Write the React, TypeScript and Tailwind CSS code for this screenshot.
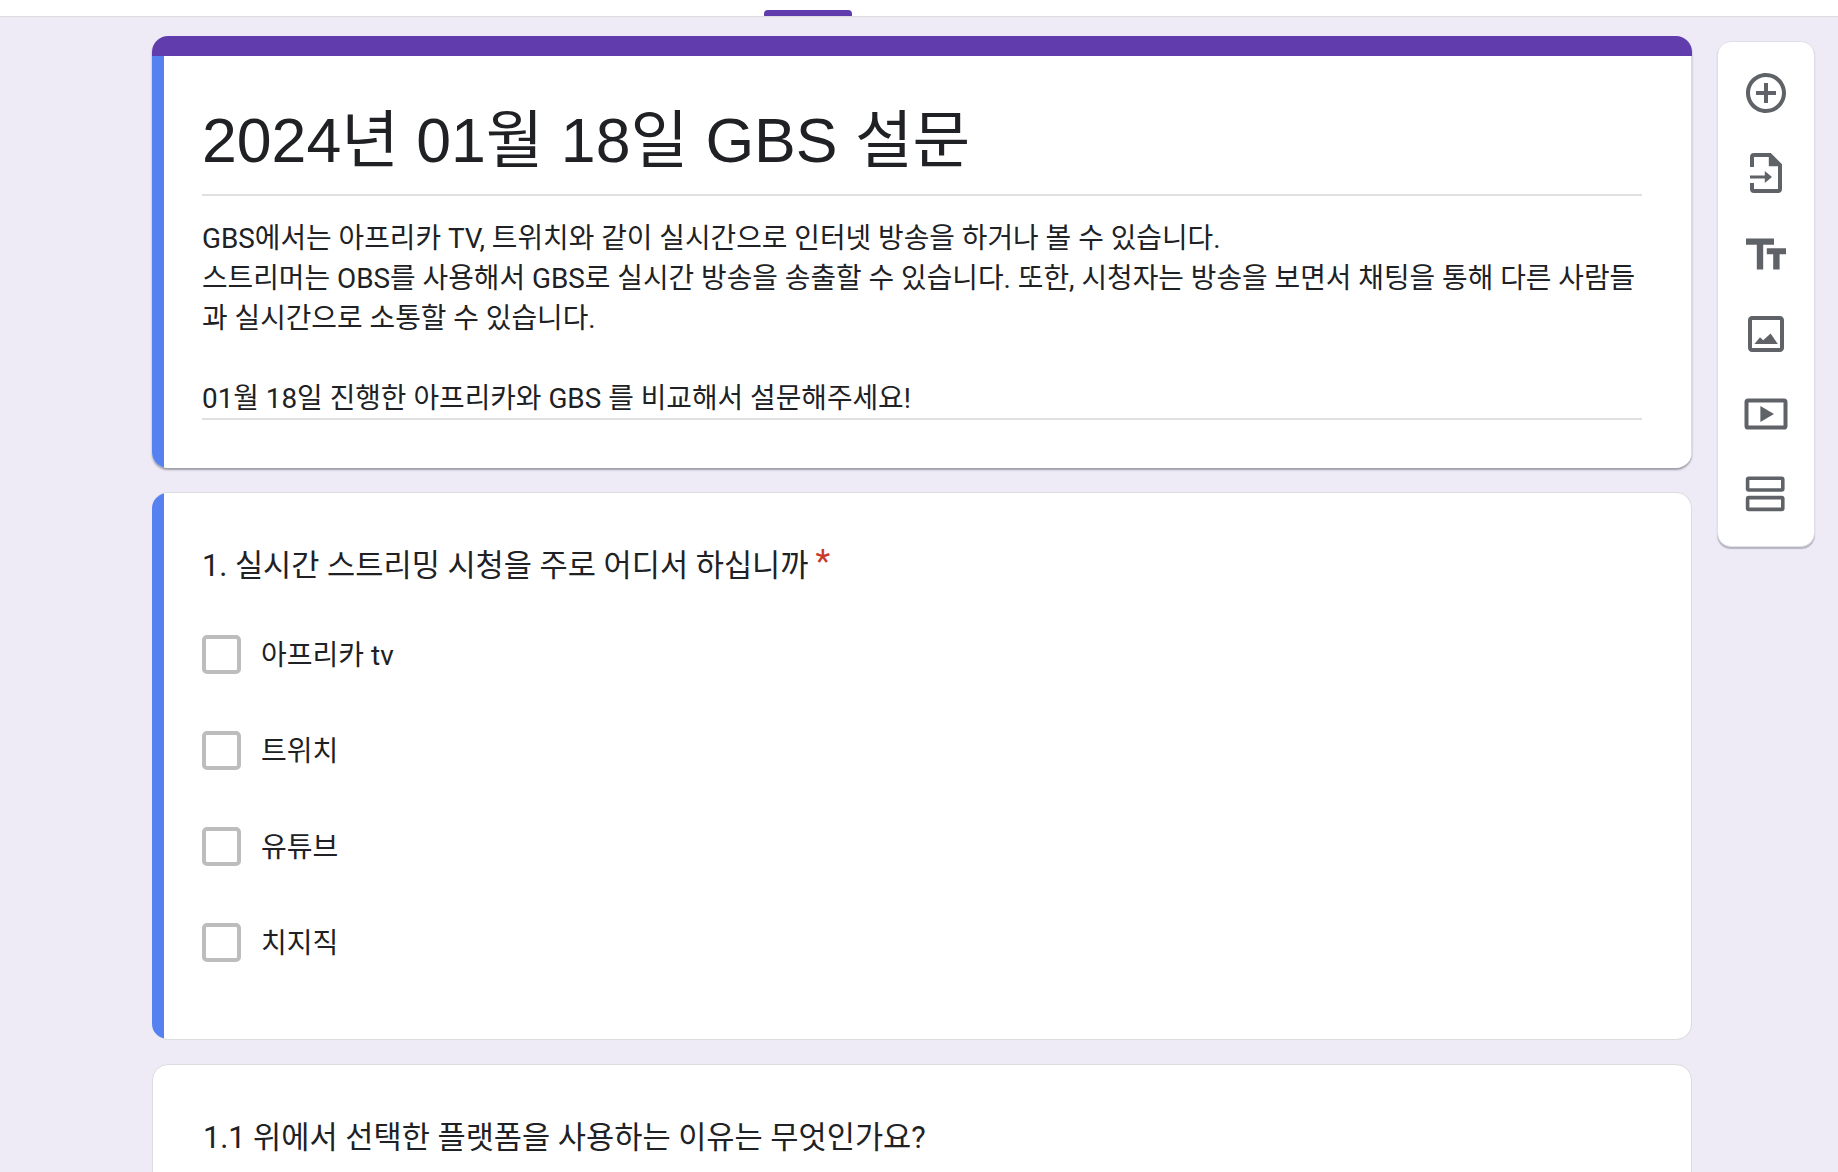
const font = 'font-["Roboto","Noto_Sans_CJK_KR",sans-serif]';

const options = ['아프리카 tv', '트위치', '유튜브', '치지직'];

const description = [
  'GBS에서는 아프리카 TV, 트위치와 같이 실시간으로 인터넷 방송을 하거나 볼 수 있습니다.',
  '스트리머는 OBS를 사용해서 GBS로 실시간 방송을 송출할 수 있습니다. 또한, 시청자는 방송을 보면서 채팅을 통해 다른 사람들',
  '과 실시간으로 소통할 수 있습니다.',
  '\u00a0',
  '01월 18일 진행한 아프리카와 GBS 를 비교해서 설문해주세요!',
];

function ToolIcon({ children }: { children: React.ReactNode }) {
  return (
    <button className="flex items-center justify-center w-[48px] h-[48px]">
      <svg viewBox="0 0 24 24" className="w-[48px] h-[48px] fill-[#5f6368]">
        {children}
      </svg>
    </button>
  );
}

function Sidebar() {
  return (
    <aside className="ml-[25px] mt-[24px] w-[98px] h-[506px] shrink-0 flex flex-col items-center justify-between pt-[27px] pb-[28px] bg-white rounded-[14px] border border-[#dfdfe8] shadow-[0_2px_1px_rgba(80,80,90,0.35)]">
      <ToolIcon>
        <path d="M13 7h-2v4H7v2h4v4h2v-4h4v-2h-4V7zm-1-5C6.48 2 2 6.48 2 12s4.48 10 10 10 10-4.48 10-10S17.52 2 12 2zm0 18c-4.41 0-8-3.59-8-8s3.59-8 8-8 8 3.59 8 8-3.59 8-8 8z" />
      </ToolIcon>
      <ToolIcon>
        <path d="M5 9V4a1 1 0 0 1 1-1h8l5 5v12a1 1 0 0 1-1 1H6a1 1 0 0 1-1-1v-3" className="fill-none stroke-[#5f6368] stroke-2" />
        <path d="M13.4 2.6v6h6z" />
        <path d="M4 13.2h7.4v-2.2l3.6 3-3.6 3v-2.2H4z" />
      </ToolIcon>
      <ToolIcon>
        <path d="M2 4.8v3.1h5.4v12.3h3.2V7.9H16V4.8H2zm20 4.8h-9.6v3h3.2v7.6h3.2v-7.6H22V9.6z" />
      </ToolIcon>
      <ToolIcon>
        <path d="M19 5v14H5V5h14m0-2H5c-1.1 0-2 .9-2 2v14c0 1.1.9 2 2 2h14c1.1 0 2-.9 2-2V5c0-1.1-.9-2-2-2z" />
        <path d="M6.2 17l2.8-3.4 1.6 1.5 3.7-3.3 3.6 5.2z" />
      </ToolIcon>
      <ToolIcon>
        <rect x="2.25" y="5.25" width="19.5" height="13.5" rx="0.8" className="fill-none stroke-[#5f6368] stroke-2" />
        <path d="M9.2 8l6.8 4-6.8 4z" />
      </ToolIcon>
      <ToolIcon>
        <rect x="2.8" y="4.1" width="17.6" height="5.9" rx="0.6" className="fill-none stroke-[#5f6368] stroke-[1.8]" />
        <rect x="2.8" y="13.8" width="17.6" height="5.9" rx="0.6" className="fill-none stroke-[#5f6368] stroke-[1.8]" />
      </ToolIcon>
    </aside>
  );
}

export default function App() {
  return (
    <div className={`h-screen overflow-hidden bg-[#eeebf7] text-[#202124] ${font}`}>
      <header className="relative h-[17px] bg-white border-b border-[#dadce0]">
        <div className="absolute left-[764px] top-[10px] w-[88px] h-[6px] rounded-t-[4px] bg-[#603cac]" />
      </header>

      <main className="flex items-start pl-[152px]">
        <div className="w-[1540px] shrink-0 pt-[19px] flex flex-col">
          <section className="h-[432px] rounded-[16px] overflow-hidden bg-white flex flex-col shadow-[0_2px_2px_rgba(60,60,70,0.45)]">
            <div className="h-[20px] bg-[#603cac]" />
            <div className="flex-1 flex border-r border-[#dadce0]">
              <div className="w-[12px] shrink-0 bg-[#5582f0]" />
              <div className="flex-1 min-w-0 pl-[38px] pr-[49px]">
                <h1 className='h-[140px] pt-[48px] border-b-2 border-[#e0e0e0] font-["Liberation_Sans","Noto_Sans_CJK_KR",sans-serif] text-[62.6px] leading-[72px] whitespace-nowrap'>
                  2024년 01월 18일 GBS 설문
                </h1>
                <div className="h-[224px] pt-[23px] border-b-2 border-[#e0e0e0] text-[27.85px] leading-[40px] whitespace-nowrap">
                  {description.map((line, i) => (
                    <p key={i}>{line}</p>
                  ))}
                </div>
              </div>
            </div>
          </section>

          <section className="mt-[24px] h-[548px] rounded-[16px] overflow-hidden bg-white flex border border-l-0 border-[#dadce0]">
            <div className="w-[12px] shrink-0 bg-[#5582f0]" />
            <div className="flex-1 pl-[38px] pt-[53px]">
              <h2 className="flex items-start text-[30.65px] leading-[40px] whitespace-nowrap">
                1. 실시간 스트리밍 시청을 주로 어디서 하십니까
                <span className="ml-[7px] -mt-[5px] text-[34px] leading-[40px] text-[#c9392b]">*</span>
              </h2>
              <ul className="mt-[49px] flex flex-col gap-[57px]">
                {options.map((option) => (
                  <li key={option} className="flex items-center h-[39px]">
                    <span className="w-[39px] h-[39px] rounded-[5px] border-[4px] border-[#bdbdbd]" />
                    <span className="ml-[20px] pt-[1px] text-[28px] leading-[39px]">{option}</span>
                  </li>
                ))}
              </ul>
            </div>
          </section>

          <section className="mt-[24px] h-[300px] rounded-[16px] bg-white border border-[#dadce0] pl-[50px] pt-[53px]">
            <h2 className="text-[30.65px] leading-[40px] whitespace-nowrap">
              1.1 위에서 선택한 플랫폼을 사용하는 이유는 무엇인가요?
            </h2>
          </section>
        </div>

        <Sidebar />
      </main>
    </div>
  );
}
